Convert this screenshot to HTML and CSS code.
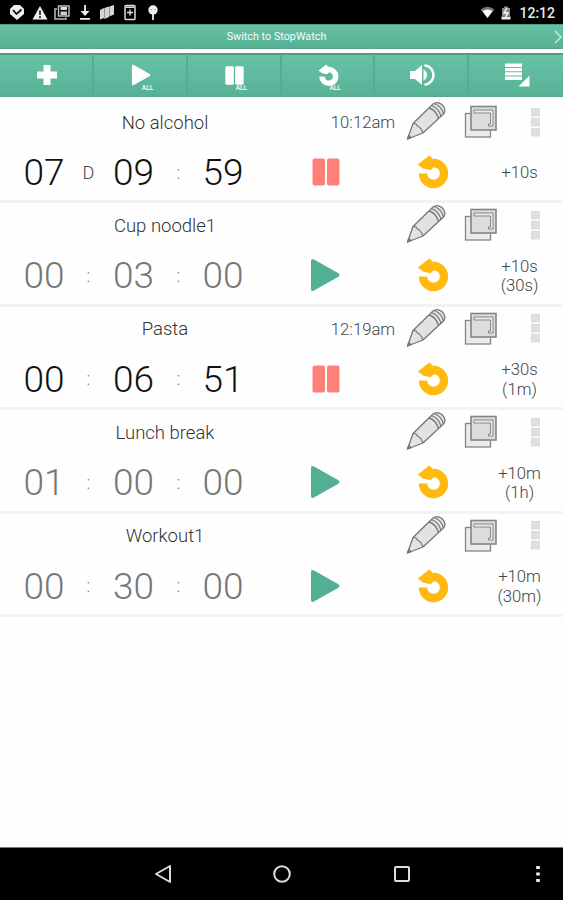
FILE: index.html
```html
<!DOCTYPE html>
<html lang="en">
<head>
    <meta charset="UTF-8">
    <meta name="viewport" content="width=device-width, initial-scale=1.0">
    <title>Timer</title>
    <link rel="stylesheet" href="styles.css">
</head>
<body>
    <!-- shared icons -->
    <svg class="sprite">
        <symbol id="play" viewBox="0 0 30 34">
            <path d="M1 3Q1 0 4 1.5L28 15Q31 17 28 19L4 32.5Q1 34 1 31Z" fill="currentColor"/>
        </symbol>
        <symbol id="pause" viewBox="0 0 28 28">
            <rect x="0.5" y="0.5" width="12.5" height="27" rx="2" fill="currentColor"/>
            <rect x="15" y="0.5" width="12.5" height="27" rx="2" fill="currentColor"/>
        </symbol>
        <symbol id="reset" viewBox="0 0 32 34">
            <path d="M6 18.5A10.500 10.500 0 1 0 16 8" fill="none" stroke="currentColor" stroke-width="8.400"/>
            <path d="M0.800 9.500L12 0.800L14 1.500L15 3.800H17V12L13.500 15.200L6 13.500Z" fill="currentColor"/>
        </symbol>
        <symbol id="pencil" viewBox="0 0 40 40">
            <g fill="#e2e2e2" stroke="#777" stroke-width="1.3" stroke-linejoin="round">
                <path d="M1.500 38L7 22.500L27 3Q31 0 36 3.500Q40.500 8 38 12.500L17 32Z"/>
                <path d="M7 22.500Q10 22 11.500 25Q15.500 27 17 32M23 7Q29.500 8.500 32.500 17.500M25.500 4.500Q32.500 7 35 15.200M28 2.500Q35.500 5 37.500 13" fill="none"/>
                <path d="M1.500 38L2.800 34.500L5 36.700Z" fill="#777"/>
            </g>
        </symbol>
        <symbol id="copy" viewBox="0 0 34 34">
            <g stroke="#858585" stroke-width="1.3">
                <rect x="1.500" y="8.500" width="25" height="23.500" fill="#ebebeb"/>
                <rect x="7" y="1.500" width="25" height="23.500" fill="#dcdcdc" stroke-width="1.600"/>
                <path d="M10 8V5H29V21H24.500V19H26.500V8Z" fill="#ececec" stroke-width="1"/>
            </g>
        </symbol>
        <symbol id="grip" viewBox="0 0 9 29">
            <g fill="#e0e0e0" stroke="#d6d6d6" stroke-width="0.800">
                <rect x="0.500" y="0.500" width="8" height="7.500"/>
                <rect x="0.500" y="10.500" width="8" height="7.500"/>
                <rect x="0.500" y="20.500" width="8" height="7.500"/>
            </g>
        </symbol>
    </svg>

    <div class="screen">
        <div class="status-bar">
            <div class="notifications">
                <svg width="16" height="17" viewBox="0 0 16 17"><path d="M5 1H11L15 5V10L8 16L1 10V5Z" fill="#eee"/><path d="M4 6L7.500 10L12.500 5.500" fill="none" stroke="#111" stroke-width="1.800"/></svg>
                <svg width="16" height="17" viewBox="0 0 16 17"><path d="M8 2L15.500 15.500H0.500Z" fill="#eee"/><path d="M8 6.500V11M8 12V14" stroke="#111" stroke-width="1.600"/></svg>
                <svg width="16" height="17" viewBox="0 0 16 17"><path d="M4.500 2H15V12H4.500ZM3 5H1V15H12V13.500" fill="none" stroke="#bbb" stroke-width="1.500"/><rect x="6.500" y="3" width="6.500" height="3" fill="#ddd"/><rect x="6.500" y="7.500" width="6.500" height="3.500" fill="#ccc"/></svg>
                <svg width="16" height="17" viewBox="0 0 16 17"><path d="M8 1V9M3 14.800H13" stroke="#eee" stroke-width="1.800"/><path d="M3.500 7H12.500L8 12Z" fill="#eee"/></svg>
                <svg width="16" height="17" viewBox="0 0 16 17"><path d="M1 6L5 4V14L1 15.500ZM5.300 4L10 2.500V13L5.300 15ZM10.300 2.500L15 1V10.500L10.300 12.500Z" fill="#d5d5d5"/></svg>
                <svg width="16" height="17" viewBox="0 0 16 17"><rect x="3" y="1.500" width="10" height="14" rx="1" fill="none" stroke="#ddd" stroke-width="1.500"/><path d="M8 5.500V11.500M5 8.500H11M4 3.200H12" stroke="#ddd" stroke-width="1.500"/></svg>
                <svg width="16" height="17" viewBox="0 0 16 17"><circle cx="8" cy="6" r="4.700" fill="#eee"/><path d="M8 9V16" stroke="#eee" stroke-width="1.800"/><path d="M5.500 5.500H7M9 5.500H10.500" stroke="#999"/></svg>
            </div>
            <div class="system">
                <svg width="15" height="13" viewBox="0 0 15 13"><path d="M0.500 3.500Q7.500 -2 14.500 3.500L7.500 12Z" fill="#777"/><path d="M2.500 5Q7.500 2 12.500 5L7.500 12Z" fill="#fff"/></svg>
                <svg width="10" height="14" viewBox="0 0 10 14"><path d="M3 0.500H7V2H9V10H1V2H3Z" fill="#888"/><rect x="0.500" y="10.500" width="9" height="3" fill="#eee"/><path d="M6 2L3 7H7L4.500 11" fill="none" stroke="#fff" stroke-width="1.400"/></svg>
                <span class="clock">12:12</span>
            </div>
        </div>

        <div class="switch-bar">
            <span>Switch to StopWatch</span>
            <svg class="chevron" width="8" height="14" viewBox="0 0 8 14"><path d="M1 1L7 7L1 13" fill="none" stroke="#d5eee5" stroke-width="1.300"/></svg>
        </div>

        <div class="toolbar">
            <div class="tool">
                <svg width="22" height="22" viewBox="0 0 22 22"><path d="M7.500 1H14.500V7.500H21V14.500H14.500V21H7.500V14.500H1V7.500H7.500Z" fill="#fff"/></svg>
            </div>
            <div class="tool">
                <svg class="tool-play"><use href="#play"/></svg>
                <span class="all">ALL</span>
            </div>
            <div class="tool">
                <svg class="tool-pause"><use href="#pause"/></svg>
                <span class="all">ALL</span>
            </div>
            <div class="tool">
                <svg class="tool-reset"><use href="#reset"/></svg>
                <span class="all">ALL</span>
            </div>
            <div class="tool">
                <svg width="26" height="24" viewBox="0 0 26 24"><path d="M1 8H6L13 2V22L6 16H1Z" fill="#fff"/><path d="M14.500 6Q22 12 14.500 18Z" fill="#fff"/><path d="M15.500 2.200C27.500 4 27.500 20 15.500 21.800" fill="none" stroke="#fff" stroke-width="2.500"/></svg>
            </div>
            <div class="tool">
                <svg width="26" height="24" viewBox="0 0 26 24"><path d="M1 2.300H18M1 6.600H18M1 10.900H18M1 15.200H18" stroke="#fff" stroke-width="3.400"/><path d="M25.500 12.500V23.500H14.500Z" fill="#fff"/></svg>
            </div>
        </div>

        <div class="timers">
            <div class="timer running">
                <div class="timer-head">
                    <span class="title">No alcohol</span>
                    <span class="ends">10:12am</span>
                    <svg class="pencil"><use href="#pencil"/></svg>
                    <svg class="copy"><use href="#copy"/></svg>
                    <svg class="grip"><use href="#grip"/></svg>
                </div>
                <div class="timer-body">
                    <span class="num">07</span><span class="sep day">D</span><span class="num">09</span><span class="sep">:</span><span class="num">59</span>
                    <svg class="pause"><use href="#pause"/></svg>
                    <svg class="reset"><use href="#reset"/></svg>
                    <span class="add">+10s</span>
                </div>
            </div>

            <div class="timer">
                <div class="timer-head">
                    <span class="title">Cup noodle1</span>
                    <span class="ends"></span>
                    <svg class="pencil"><use href="#pencil"/></svg>
                    <svg class="copy"><use href="#copy"/></svg>
                    <svg class="grip"><use href="#grip"/></svg>
                </div>
                <div class="timer-body">
                    <span class="num">00</span><span class="sep">:</span><span class="num">03</span><span class="sep">:</span><span class="num">00</span>
                    <svg class="play"><use href="#play"/></svg>
                    <svg class="reset"><use href="#reset"/></svg>
                    <span class="add">+10s<br>(30s)</span>
                </div>
            </div>

            <div class="timer running">
                <div class="timer-head">
                    <span class="title">Pasta</span>
                    <span class="ends">12:19am</span>
                    <svg class="pencil"><use href="#pencil"/></svg>
                    <svg class="copy"><use href="#copy"/></svg>
                    <svg class="grip"><use href="#grip"/></svg>
                </div>
                <div class="timer-body">
                    <span class="num">00</span><span class="sep">:</span><span class="num">06</span><span class="sep">:</span><span class="num">51</span>
                    <svg class="pause"><use href="#pause"/></svg>
                    <svg class="reset"><use href="#reset"/></svg>
                    <span class="add">+30s<br>(1m)</span>
                </div>
            </div>

            <div class="timer">
                <div class="timer-head">
                    <span class="title">Lunch break</span>
                    <span class="ends"></span>
                    <svg class="pencil"><use href="#pencil"/></svg>
                    <svg class="copy"><use href="#copy"/></svg>
                    <svg class="grip"><use href="#grip"/></svg>
                </div>
                <div class="timer-body">
                    <span class="num">01</span><span class="sep">:</span><span class="num">00</span><span class="sep">:</span><span class="num">00</span>
                    <svg class="play"><use href="#play"/></svg>
                    <svg class="reset"><use href="#reset"/></svg>
                    <span class="add">+10m<br>(1h)</span>
                </div>
            </div>

            <div class="timer">
                <div class="timer-head">
                    <span class="title">Workout1</span>
                    <span class="ends"></span>
                    <svg class="pencil"><use href="#pencil"/></svg>
                    <svg class="copy"><use href="#copy"/></svg>
                    <svg class="grip"><use href="#grip"/></svg>
                </div>
                <div class="timer-body">
                    <span class="num">00</span><span class="sep">:</span><span class="num">30</span><span class="sep">:</span><span class="num">00</span>
                    <svg class="play"><use href="#play"/></svg>
                    <svg class="reset"><use href="#reset"/></svg>
                    <span class="add">+10m<br>(30m)</span>
                </div>
            </div>
        </div>

        <div class="nav-bar">
            <svg width="18" height="20" viewBox="0 0 18 20"><path d="M16 2V18L2 10Z" fill="none" stroke="#ddd" stroke-width="2" stroke-linejoin="round"/></svg>
            <svg width="20" height="20" viewBox="0 0 20 20"><circle cx="10" cy="10" r="7.800" fill="none" stroke="#ddd" stroke-width="2"/></svg>
            <svg width="18" height="18" viewBox="0 0 18 18"><rect x="2" y="2" width="14" height="14" rx="1" fill="none" stroke="#ddd" stroke-width="2"/></svg>
            <svg width="6" height="20" viewBox="0 0 6 20"><path d="M1.200 2H4.800V5H1.200ZM1.200 8.500H4.800V11.500H1.200ZM1.200 15H4.800V18H1.200Z" fill="#eee"/></svg>
        </div>
    </div>
</body>
</html>
```
FILE: styles.css
```css
body {
    margin: 0;
    font-family: Roboto, sans-serif;
    background-color: #fefefe;
    color: #444;
}
.sprite {
    display: none;
}
.screen {
    display: flex;
    flex-direction: column;
    height: 900px;
    overflow: hidden;
}
.status-bar {
    display: flex;
    justify-content: space-between;
    align-items: center;
    box-sizing: border-box;
    height: 24px;
    padding: 1px 8px 0 9px;
    background-color: #000;
}
.notifications {
    display: flex;
    gap: 6.6px;
}
.system {
    display: flex;
    align-items: center;
    gap: 8px;
}
.system svg:first-child {
    margin-right: -2px;
}
.clock {
    color: #e8e8e8;
    font-size: 14px;
    font-weight: 500;
    line-height: 20px;
}
.switch-bar {
    display: flex;
    align-items: center;
    box-sizing: border-box;
    height: 25px;
    border-top: 1px solid #4f9c84;
    border-bottom: 1px solid #58a48d;
    background: linear-gradient(#66c1a5, #56b094);
    color: #f3fffb;
    font-size: 10.8px;
}
.switch-bar span {
    flex: 1;
    padding-right: 11px;
    text-align: center;
}
.chevron {
    margin-left: -10px;
    margin-right: 1px;
}
.toolbar {
    display: grid;
    grid-template-columns: repeat(6, 1fr);
    box-sizing: border-box;
    height: 44px;
    margin-top: 4px;
    border-top: 2px solid #4d9e85;
    border-bottom: 1px solid #58a48d;
    background: linear-gradient(#68c2a7, #57b195);
}
.tool {
    position: relative;
    display: flex;
    align-items: center;
    justify-content: center;
    padding-left: 2px;
    padding-bottom: 1px;
    border-right: 2px solid #57ad93;
    color: #fff;
}
.tool:last-child {
    border-right: none;
}
.tool-play {
    width: 20px;
    height: 22px;
    margin-bottom: 1px;
}
.tool-pause {
    width: 19px;
    height: 19px;
}
.tool-reset {
    width: 21px;
    height: 23px;
}
/* small label over the corner of the icon */
.all {
    position: absolute;
    left: 48px;
    bottom: 4px;
    font-size: 6.5px;
    font-weight: 500;
    line-height: 8px;
}
.timers {
    flex: 1;
    padding-top: 3px;
}
.timer {
    box-sizing: border-box;
    height: 103.4px;
    border-bottom: 3px solid #f3f3f3;
    color: #777;
}
.running {
    color: #111;
}
.timer-head {
    display: grid;
    grid-template-columns: 330px 66px 60px 49px 61px;
    align-items: center;
    justify-items: center;
    height: 45px;
}
.title {
    color: #333;
    font-size: 18.5px;
    font-weight: 300;
}
.ends {
    color: #444;
    font-size: 16.7px;
    font-weight: 300;
}
.pencil {
    width: 40px;
    height: 40px;
    margin-bottom: 3px;
}
.copy {
    width: 34px;
    height: 34px;
    margin-bottom: 1px;
}
.grip {
    width: 9px;
    height: 29px;
    margin-bottom: 1px;
}
.timer-body {
    display: grid;
    grid-template-columns: 44px 45px 45px 45px 44px 17px 126px 88px 87px;
    align-items: center;
    justify-items: center;
    height: 56px;
    padding-left: 22px;
}
.num {
    font-size: 37px;
    font-weight: 300;
    line-height: 44px;
}
.sep {
    color: #777;
    font-size: 18px;
    font-weight: 300;
    margin-bottom: 2px;
}
.day {
    color: #444;
}
.play {
    grid-column: 7;
    width: 30px;
    height: 34px;
    margin-bottom: 2px;
    color: #54b095;
}
.pause {
    grid-column: 7;
    width: 28px;
    height: 28px;
    margin-left: 2px;
    margin-bottom: 2px;
    color: #ff8079;
}
.reset {
    width: 32px;
    height: 34px;
    margin-left: 1px;
    margin-bottom: 2px;
    color: #ffb90f;
}
.add {
    color: #444;
    font-size: 16.7px;
    font-weight: 300;
    line-height: 19.5px;
    text-align: center;
}
.nav-bar {
    display: grid;
    grid-template-columns: 119px 120px 120px 152px;
    align-items: center;
    justify-items: center;
    box-sizing: border-box;
    height: 53px;
    padding-left: 103px;
    border-top: 1px solid #777;
    background-color: #000;
}
```
